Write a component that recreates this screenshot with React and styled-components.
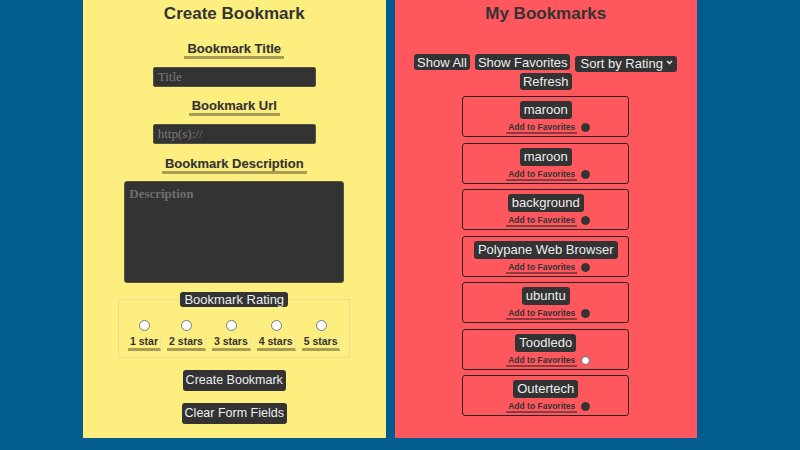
import React from 'react';
import styled, { createGlobalStyle } from 'styled-components';

const GlobalStyle = createGlobalStyle`
  html, body {
    margin: 0;
    padding: 0;
    background: #035c8f;
  }
  body {
    font-family: 'Liberation Sans', Arial, sans-serif;
    color: #333;
  }
`;

const Page = styled.div`
  display: flex;
  gap: 9px;
  height: 450px;
  box-sizing: border-box;
  padding: 0 103px 12px 83px;
  background: #035c8f;
`;

const Panel = styled.section`
  flex: 1;
  display: flex;
  flex-direction: column;
  align-items: center;
  background: ${p => p.$bg};
  padding: 3px 10px 0;
  box-sizing: border-box;
`;

const Heading = styled.h2`
  margin: 0;
  font-size: 17px;
  line-height: 22px;
  font-weight: bold;
  color: #333;
`;

const FieldLabel = styled.label`
  display: inline-block;
  margin-top: ${p => p.$top}px;
  padding: 0 3px;
  font-size: 13px;
  font-weight: bold;
  line-height: 15px;
  color: #333;
  border-bottom: 3px solid #a79d56;
  text-shadow: 0 0 1px rgba(0, 0, 0, 0.15);
`;

const TextInput = styled.input`
  margin-top: 8px;
  width: 163px;
  height: 20px;
  box-sizing: border-box;
  padding: 0 4px;
  background: #333;
  border: 1px solid #55533f;
  border-radius: 2px;
  color: #eee;
  font-family: 'Liberation Serif', 'Times New Roman', serif;
  font-size: 13px;

  &::placeholder {
    color: #7a7a7a;
  }
`;

const TextArea = styled.textarea`
  margin-top: 7px;
  width: 220px;
  height: 102px;
  box-sizing: border-box;
  padding: 4px;
  resize: none;
  background: #333;
  border: 1px solid #55533f;
  border-radius: 3px;
  color: #eee;
  font-family: 'Liberation Serif', 'Times New Roman', serif;
  font-size: 13px;
  font-weight: bold;

  &::placeholder {
    color: #6e6e6e;
  }
`;

const RatingSet = styled.fieldset`
  margin: 9px 0 0;
  width: 232px;
  box-sizing: border-box;
  padding: 13px 4px 6px;
  border: 1px solid #e8dc98;
`;

const Legend = styled.legend`
  margin: 0 auto;
  padding: 0 4px;
  background: #333;
  color: #eee;
  font-size: 13px;
  line-height: 15px;
  border-radius: 3px;
`;

const RatingRow = styled.div`
  display: flex;
  justify-content: center;
  gap: 6px;
`;

const RatingOption = styled.div`
  display: flex;
  flex-direction: column;
  align-items: center;
  gap: 4px;
`;

const Radio = styled.input`
  margin: 0;
  width: 11px;
  height: 11px;
`;

const RatingLabel = styled.label`
  white-space: nowrap;
  padding: 0 2px;
  font-size: 10.5px;
  font-weight: bold;
  line-height: 13px;
  color: #333;
  border-bottom: 3px solid #a79d56;
  border-right: 1px solid #ece3ad;
`;

const DarkButton = styled.button`
  margin-top: ${p => p.$top || 0}px;
  height: ${p => p.$h || 21}px;
  padding: 0 ${p => p.$px || 3}px;
  background: #333;
  color: #eee;
  border: none;
  border-radius: 3px;
  font-family: 'Liberation Sans', Arial, sans-serif;
  font-size: ${p => p.$fs || 13}px;
  line-height: 1;
  white-space: nowrap;
  cursor: pointer;
`;

const Controls = styled.div`
  margin-top: 29px;
  display: flex;
  flex-wrap: wrap;
  justify-content: center;
  column-gap: 5px;
  row-gap: 3px;
  width: 280px;
`;

const SelectWrap = styled.div`
  position: relative;
  height: 16px;
`;

const Select = styled.select`
  appearance: none;
  height: 16px;
  padding: 0 14px 0 5px;
  background: #333;
  color: #eee;
  border: none;
  border-radius: 3px;
  font-family: 'Liberation Sans', Arial, sans-serif;
  font-size: 13px;
`;

const Chevron = styled.svg`
  position: absolute;
  right: 4px;
  top: 6px;
  pointer-events: none;
`;

const List = styled.div`
  margin-top: 6px;
  display: flex;
  flex-direction: column;
  gap: 5.5px;
`;

const Card = styled.div`
  width: 167px;
  height: 41px;
  box-sizing: border-box;
  border: 1px solid #2a2325;
  border-radius: 3px;
  display: flex;
  flex-direction: column;
  align-items: center;
  padding-top: 4px;
`;

const CardTitle = styled.span`
  height: 18px;
  line-height: 18px;
  padding: 0 4px;
  background: #333;
  color: #eee;
  border-radius: 3px;
  font-size: 13px;
`;

const FavRow = styled.div`
  margin-top: 3px;
  display: flex;
  align-items: flex-start;
  gap: 4px;
  padding-left: 5px;
`;

const FavLabel = styled.span`
  font-size: 8.5px;
  font-weight: bold;
  line-height: 10px;
  color: #333;
  padding: 0 2px;
  border-bottom: 2px solid #8e3b40;
`;

const FavDot = styled.span`
  margin-top: 1px;
  width: 9px;
  height: 9px;
  border-radius: 50%;
  box-sizing: border-box;
  background: ${p => (p.$on ? '#fff' : '#333')};
  border: 1px solid ${p => (p.$on ? '#666' : '#333')};
`;

const bookmarks = [
  { name: 'maroon', fav: false },
  { name: 'maroon', fav: false },
  { name: 'background', fav: false },
  { name: 'Polypane Web Browser', fav: false },
  { name: 'ubuntu', fav: false },
  { name: 'Toodledo', fav: true },
  { name: 'Outertech', fav: false },
];

const ratings = ['1 star', '2 stars', '3 stars', '4 stars', '5 stars'];

export default function App() {
  return (
    <>
      <GlobalStyle />
      <Page>
        <Panel $bg="#fdee80">
          <Heading>Create Bookmark</Heading>
          <FieldLabel $top={16}>Bookmark Title</FieldLabel>
          <TextInput placeholder="Title" />
          <FieldLabel $top={11}>Bookmark Url</FieldLabel>
          <TextInput placeholder="http(s)://" />
          <FieldLabel $top={12}>Bookmark Description</FieldLabel>
          <TextArea placeholder="Description" />
          <RatingSet>
            <Legend>Bookmark Rating</Legend>
            <RatingRow>
              {ratings.map((r, i) => (
                <RatingOption key={r}>
                  <Radio type="radio" name="rating" id={`r${i}`} />
                  <RatingLabel htmlFor={`r${i}`}>{r}</RatingLabel>
                </RatingOption>
              ))}
            </RatingRow>
          </RatingSet>
          <DarkButton $top={12} $fs={12.5}>Create Bookmark</DarkButton>
          <DarkButton $top={12} $fs={12.5}>Clear Form Fields</DarkButton>
        </Panel>
        <Panel $bg="#fe585e">
          <Heading>My Bookmarks</Heading>
          <Controls>
            <DarkButton $h={16}>Show All</DarkButton>
            <DarkButton $h={16}>Show Favorites</DarkButton>
            <SelectWrap>
              <Select defaultValue="rating">
                <option value="rating">Sort by Rating</option>
              </Select>
              <Chevron width="7" height="5" viewBox="0 0 7 5">
                <path d="M1 1l2.5 2.5L6 1" stroke="#eee" strokeWidth="1.4" fill="none" />
              </Chevron>
            </SelectWrap>
            <DarkButton $h={17}>Refresh</DarkButton>
          </Controls>
          <List>
            {bookmarks.map((b, i) => (
              <Card key={i}>
                <CardTitle>{b.name}</CardTitle>
                <FavRow>
                  <FavLabel>Add to Favorites</FavLabel>
                  <FavDot $on={b.fav} />
                </FavRow>
              </Card>
            ))}
          </List>
        </Panel>
      </Page>
    </>
  );
}
